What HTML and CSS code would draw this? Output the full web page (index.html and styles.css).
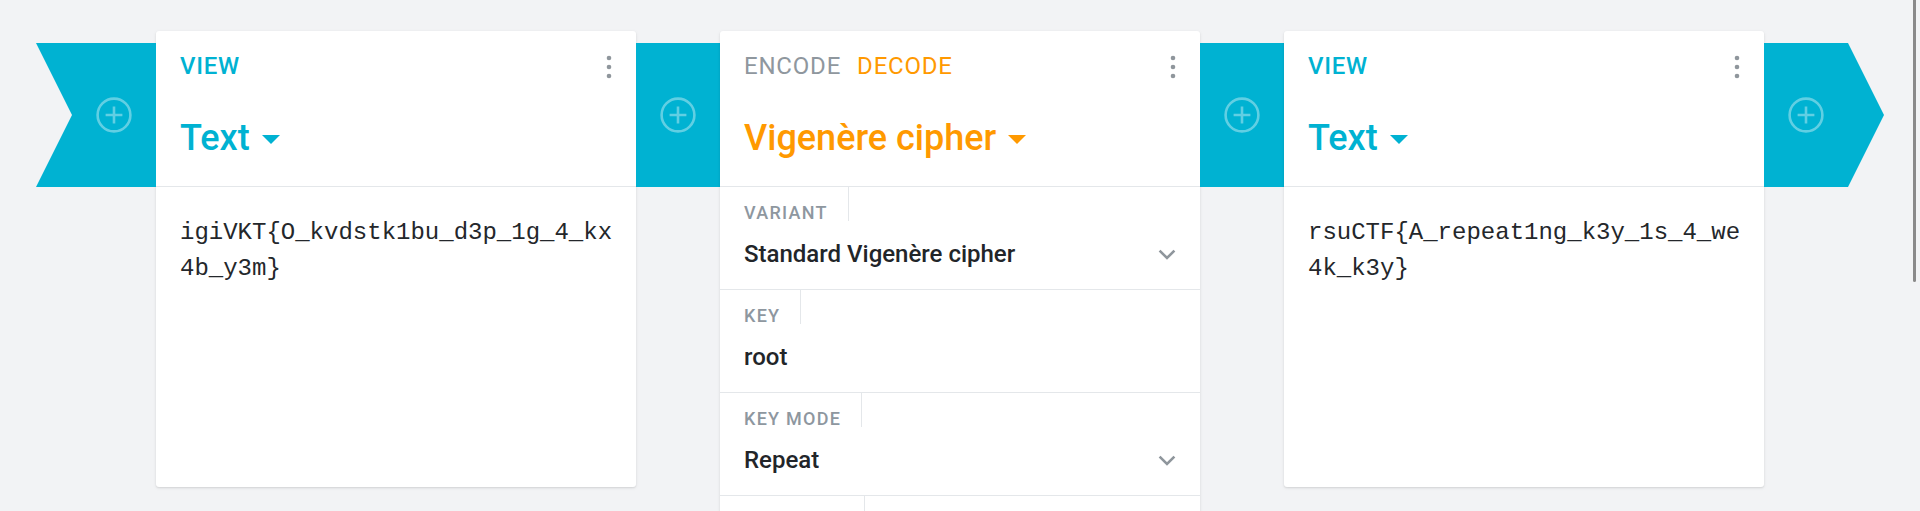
FILE: index.html
```html
<!DOCTYPE html>
<html lang="en">
<head>
<meta charset="utf-8">
<title>cryptii pipe</title>
<link rel="stylesheet" href="styles.css">
</head>
<body>
<main class="pipe">
  <div class="slot slot--first">
    <svg class="plus" width="36" height="36" viewBox="0 0 36 36"><circle cx="18" cy="18" r="16.4" fill="none" stroke="currentColor" stroke-width="2.6"/><path d="M18 9.6v16.8M9.6 18h16.8" stroke="currentColor" stroke-width="2.6" fill="none"/></svg>
  </div>

  <section class="brick brick--view">
    <header class="brick-header">
      <div class="brick-meta">
        <span class="mode mode--view">VIEW</span>
        <svg class="dots" width="6" height="24" viewBox="0 0 6 24"><circle cx="3" cy="3" r="2.3"/><circle cx="3" cy="12" r="2.3"/><circle cx="3" cy="21" r="2.3"/></svg>
      </div>
      <div class="brick-title title--view">Text<svg class="caret" width="18" height="9" viewBox="0 0 18 9"><polygon points="0,0 18,0 9,9"/></svg></div>
    </header>
    <div class="brick-text">igiVKT{O_kvdstk1bu_d3p_1g_4_kx4b_y3m}</div>
  </section>

  <div class="slot">
    <svg class="plus" width="36" height="36" viewBox="0 0 36 36"><circle cx="18" cy="18" r="16.4" fill="none" stroke="currentColor" stroke-width="2.6"/><path d="M18 9.6v16.8M9.6 18h16.8" stroke="currentColor" stroke-width="2.6" fill="none"/></svg>
  </div>

  <section class="brick brick--encoder">
    <header class="brick-header">
      <div class="brick-meta">
        <div class="modes">
          <span class="mode mode--off">ENCODE</span>
          <span class="mode mode--on">DECODE</span>
        </div>
        <svg class="dots" width="6" height="24" viewBox="0 0 6 24"><circle cx="3" cy="3" r="2.3"/><circle cx="3" cy="12" r="2.3"/><circle cx="3" cy="21" r="2.3"/></svg>
      </div>
      <div class="brick-title title--encoder">Vigenère cipher<svg class="caret" width="18" height="9" viewBox="0 0 18 9"><polygon points="0,0 18,0 9,9"/></svg></div>
    </header>
    <div class="field">
      <div class="field-label">VARIANT</div>
      <div class="field-value">
        <span>Standard Vigenère cipher</span>
        <svg class="chevron" width="18" height="11" viewBox="0 0 18 11"><path d="M1.6 1.6L9 9l7.4-7.4" fill="none" stroke="currentColor" stroke-width="2.6"/></svg>
      </div>
    </div>
    <div class="field">
      <div class="field-label">KEY</div>
      <div class="field-value"><span>root</span></div>
    </div>
    <div class="field">
      <div class="field-label">KEY MODE</div>
      <div class="field-value">
        <span>Repeat</span>
        <svg class="chevron" width="18" height="11" viewBox="0 0 18 11"><path d="M1.6 1.6L9 9l7.4-7.4" fill="none" stroke="currentColor" stroke-width="2.6"/></svg>
      </div>
    </div>
    <div class="field">
      <div class="field-label field-label--blank"></div>
      <div class="field-value"></div>
    </div>
  </section>

  <div class="slot">
    <svg class="plus" width="36" height="36" viewBox="0 0 36 36"><circle cx="18" cy="18" r="16.4" fill="none" stroke="currentColor" stroke-width="2.6"/><path d="M18 9.6v16.8M9.6 18h16.8" stroke="currentColor" stroke-width="2.6" fill="none"/></svg>
  </div>

  <section class="brick brick--view">
    <header class="brick-header">
      <div class="brick-meta">
        <span class="mode mode--view">VIEW</span>
        <svg class="dots" width="6" height="24" viewBox="0 0 6 24"><circle cx="3" cy="3" r="2.3"/><circle cx="3" cy="12" r="2.3"/><circle cx="3" cy="21" r="2.3"/></svg>
      </div>
      <div class="brick-title title--view">Text<svg class="caret" width="18" height="9" viewBox="0 0 18 9"><polygon points="0,0 18,0 9,9"/></svg></div>
    </header>
    <div class="brick-text">rsuCTF{A_repeat1ng_k3y_1s_4_we4k_k3y}</div>
  </section>

  <div class="slot slot--last">
    <svg class="plus" width="36" height="36" viewBox="0 0 36 36"><circle cx="18" cy="18" r="16.4" fill="none" stroke="currentColor" stroke-width="2.6"/><path d="M18 9.6v16.8M9.6 18h16.8" stroke="currentColor" stroke-width="2.6" fill="none"/></svg>
  </div>
</main>
<div class="scroll-thumb"></div>
</body>
</html>
```

FILE: styles.css
```css
html, body {
  margin: 0;
  height: 511px;
  overflow: hidden;
}

body {
  background: #f2f3f5;
  font-family: Roboto, "Noto Sans", "Liberation Sans", sans-serif;
  color: #222529;
  position: relative;
}

.pipe {
  display: flex;
  align-items: flex-start;
  padding: 31px 0 0 36px;
}

.slot {
  flex: 0 0 84px;
  width: 84px;
  height: 144px;
  margin-top: 12px;
  background: #00b2d2;
  display: flex;
  align-items: center;
  justify-content: center;
  color: rgba(255, 255, 255, 0.38);
  box-sizing: border-box;
}

.slot--first {
  flex-basis: 120px;
  width: 120px;
  padding-left: 36px;
  clip-path: polygon(0 0, 100% 0, 100% 100%, 0 100%, 36px 50%);
}

.slot--last {
  flex-basis: 120px;
  width: 120px;
  padding-right: 36px;
  clip-path: polygon(0 0, calc(100% - 36px) 0, 100% 50%, calc(100% - 36px) 100%, 0 100%);
}

.plus {
  display: block;
}

.brick {
  flex: 0 0 480px;
  width: 480px;
  background: #fff;
  border-radius: 3px;
  box-shadow: 0 1px 2px rgba(0, 0, 0, 0.10), 0 1px 4px rgba(0, 0, 0, 0.05);
  box-sizing: border-box;
}

.brick--view {
  height: 456px;
}

.brick-header {
  padding: 23px 24px 30px;
  border-bottom: 1px solid #e4e7ea;
}

.brick-meta {
  height: 25px;
  display: flex;
  align-items: center;
  justify-content: space-between;
}

.modes {
  display: flex;
  gap: 16px;
}

.mode {
  font-size: 24px;
  line-height: 25px;
  font-weight: 500;
  letter-spacing: 0.03em;
}

.mode--view { color: #00b2d2; }
.mode--off { color: #8f979e; font-weight: 400; letter-spacing: 0.8px; }
.mode--on { color: #ff9900; font-weight: 400; letter-spacing: 0.8px; }

.dots {
  fill: #8f969c;
  display: block;
}

.brick-title {
  margin-top: 41px;
  height: 36px;
  font-size: 36px;
  line-height: 36px;
  font-weight: 500;
  display: flex;
  align-items: center;
}

.title--view { color: #00b2d2; fill: #00b2d2; }
.title--encoder { color: #ff9900; fill: #ff9900; }

.caret {
  margin-left: 12px;
  margin-top: 2px;
  display: block;
}

.brick-text {
  padding: 28px 16px 0 24px;
  font-family: "Liberation Mono", "DejaVu Sans Mono", monospace;
  font-size: 24px;
  line-height: 36px;
  color: #24272b;
  word-break: break-all;
}

.field {
  padding: 0 24px;
  border-bottom: 1px solid #e4e7ea;
}

.field-label {
  display: inline-block;
  box-sizing: border-box;
  height: 34px;
  padding: 18px 20px 0 0;
  border-right: 1px solid #e4e7ea;
  font-size: 18px;
  line-height: 16px;
  font-weight: 500;
  letter-spacing: 0.07em;
  color: #8e979f;
  vertical-align: top;
}

.field-label--blank {
  width: 121px;
}

.field-value {
  display: flex;
  align-items: center;
  justify-content: space-between;
  height: 24px;
  margin: 21px 0 23px;
  font-size: 24px;
  line-height: 24px;
  font-weight: 500;
  color: #222529;
}

.chevron {
  color: #8f969c;
  display: block;
}

.scroll-thumb {
  position: absolute;
  top: 0;
  right: 4px;
  width: 3px;
  height: 282px;
  border-radius: 0 0 2px 2px;
  background: #8a8a8a;
}
```
